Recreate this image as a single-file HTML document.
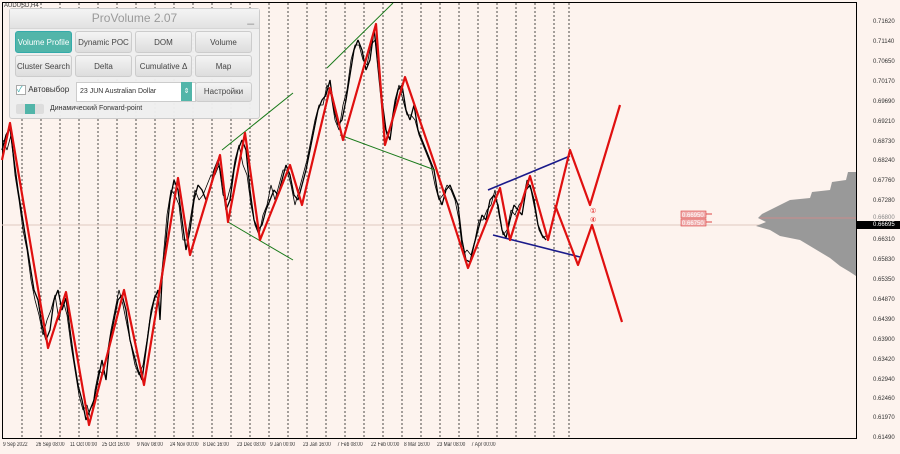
<!DOCTYPE html>
<html><head><meta charset="utf-8"><style>
body{margin:0;width:900px;height:454px;background:#fdf3ee;overflow:hidden;position:relative;font-family:"Liberation Sans",sans-serif}
.ax{position:absolute;font-size:6px;color:#333;white-space:nowrap}
.dt{position:absolute;font-size:6px;color:#333;white-space:nowrap;transform:scaleX(0.8);transform-origin:0 0;top:442px}
#panel{position:absolute;left:9px;top:8px;width:249px;height:109px;background:rgba(238,238,238,.96);border:1px solid #ccc;border-radius:3px;font-family:"Liberation Sans","Noto Sans CJK SC",sans-serif}
.ttl{height:19px;background:linear-gradient(#f4f4f4,#e2e2e2);text-align:center;color:#9a9a9a;font-size:12px;line-height:19px;border-bottom:1px solid #d6d6d6}
.b{position:absolute;width:55px;height:20px;background:linear-gradient(#f4f4f4,#ddd);border:1px solid #ccc;border-radius:3px;font-size:8px;color:#444;text-align:center;line-height:22px}
.b.on{background:#52b5a9;color:#fff;border-color:#3aa}
</style></head><body>
<svg width="900" height="454" style="position:absolute;left:0;top:0">
<rect x="2.5" y="2.5" width="854" height="436" fill="none" stroke="#000" stroke-width="1"/>
<g stroke="#000" stroke-width="0.7" stroke-dasharray="2,2">
<line x1="22" y1="3" x2="22" y2="438"/><line x1="41" y1="3" x2="41" y2="438"/><line x1="60" y1="3" x2="60" y2="438"/><line x1="79" y1="3" x2="79" y2="438"/><line x1="98" y1="3" x2="98" y2="438"/><line x1="117" y1="3" x2="117" y2="438"/><line x1="136" y1="3" x2="136" y2="438"/><line x1="155" y1="3" x2="155" y2="438"/><line x1="174" y1="3" x2="174" y2="438"/><line x1="193" y1="3" x2="193" y2="438"/><line x1="212" y1="3" x2="212" y2="438"/><line x1="231" y1="3" x2="231" y2="438"/><line x1="250" y1="3" x2="250" y2="438"/><line x1="269" y1="3" x2="269" y2="438"/><line x1="288" y1="3" x2="288" y2="438"/><line x1="307" y1="3" x2="307" y2="438"/><line x1="326" y1="3" x2="326" y2="438"/><line x1="345" y1="3" x2="345" y2="438"/><line x1="364" y1="3" x2="364" y2="438"/><line x1="383" y1="3" x2="383" y2="438"/><line x1="402" y1="3" x2="402" y2="438"/><line x1="421" y1="3" x2="421" y2="438"/><line x1="440" y1="3" x2="440" y2="438"/><line x1="459" y1="3" x2="459" y2="438"/><line x1="478" y1="3" x2="478" y2="438"/><line x1="497" y1="3" x2="497" y2="438"/><line x1="516" y1="3" x2="516" y2="438"/><line x1="535" y1="3" x2="535" y2="438"/><line x1="554" y1="3" x2="554" y2="438"/><line x1="569" y1="3" x2="569" y2="438"/>
</g>
<line x1="2" y1="225" x2="856" y2="225" stroke="#e0c8c0" stroke-width="1"/>
<polygon fill="#999" points="856,172 848,172 846,180 832,182 830,190 812,192 810,198 790,200 780,205 770,210 762,214 758,218 766,222 756,226 770,230 780,236 800,240 810,246 820,252 830,258 840,266 850,272 856,276"/>
<line x1="760" y1="218" x2="856" y2="218" stroke="#d88" stroke-width="0.8"/>
<g fill="none" stroke="#000" stroke-width="1.3" stroke-linejoin="bevel">
<polyline points="2,150 6,135 10,128 14,160 18,190 22,215 26,240 30,265 34,290 38,300 42,325 46,340 50,330 54,300 58,290 62,310 66,298 70,330 74,360 78,385 82,400 86,420 90,410 94,400 98,380 102,360 106,380 110,340 114,320 118,300 122,295 126,310 130,340 134,355 138,370 142,380 146,350 150,320 154,300 158,290 160,320 162,280 166,240 170,200 174,180 178,190 182,220 186,250 190,230 194,200 198,185 202,190 206,200 210,190 214,170 218,160 222,180 226,210 230,200 234,170 238,150 242,140 246,150 250,190 254,220 258,230 262,225 266,210 270,200 274,190 278,195 282,180 286,165 290,175 294,195 298,200 302,185 306,170 310,150 314,130 318,110 322,100 326,95 330,80 334,110 338,125 342,120 346,100 350,75 354,50 358,40 362,50 366,70 370,60 374,30 378,60 382,100 386,130 390,140 394,110 398,90 402,85 406,110 410,120 414,105 418,130 422,140 426,150 430,160 434,170 438,195 442,205 446,190 450,185 454,195 458,205 462,240 466,260 470,262 474,245 478,230 482,215 486,220 490,200 494,195 498,205 502,230 506,238 510,220 514,205 518,210 522,215 526,190 530,185 534,200 538,225 542,235 546,240"/>
<polyline stroke-width="0.8" points="3,140 7,150 11,135 15,175 19,200 23,230 27,250 31,280 35,300 39,315 43,335 47,320 51,310 55,295 59,320 63,300 67,315 71,345 75,370 79,395 83,410 87,405 91,420 95,390 99,370 103,375 107,355 111,330 115,310 119,290 123,305 127,325 131,345 135,365 139,375 143,365 147,340 151,310 155,295 159,300 163,260 167,215 171,190 175,195 179,205 183,240 187,240 191,215 195,190 199,200 203,195 207,185 211,175 215,175 219,165 223,195 227,200 231,185 235,160 239,145 243,165 247,175 251,205 255,225 259,235 263,215 267,205 271,185 275,200 279,185 283,170 287,170 291,185 295,205 299,190 303,175 307,160 311,140 315,120 319,105 323,105 327,85 331,95 335,120 339,130 343,105 347,90 351,60 355,45 359,45 363,60 367,65 371,45 375,40 379,80 383,120 387,135 391,125 395,100 399,85 403,100 407,115 411,115 415,120 419,135 423,145 427,155 431,165 435,185 439,200 443,195 447,185 451,190 455,200 459,220 463,255 467,250 471,255 475,240 479,220 483,220 487,210 491,205 495,190 499,215 503,235 507,230 511,210 515,215 519,205 523,200 527,180 531,190 535,210 539,230 543,238 547,235"/>
</g>
<g fill="none" stroke-width="1"><line x1="222" y1="150" x2="293" y2="93" stroke="#1a7a1a"/><line x1="228" y1="222" x2="293" y2="260" stroke="#1a7a1a"/><line x1="327" y1="68" x2="393" y2="3" stroke="#1a7a1a"/><line x1="340" y1="135" x2="435" y2="170" stroke="#1a7a1a"/>
<line x1="488" y1="190" x2="570" y2="156" stroke="#1a1a8a" stroke-width="1.6"/><line x1="493" y1="235" x2="580" y2="257" stroke="#1a1a8a" stroke-width="1.6"/></g>
<polyline fill="none" stroke="#e01010" stroke-width="2.2" stroke-linejoin="round" points="2,160 10,123 48,348 66,292 89,425 124,290 144,385 178,178 190,255 220,155 228,222 245,133 260,240 290,165 302,205 330,88 343,140 376,24 385,145 405,77 435,165 468,268 500,188 510,240 530,176 548,240 570,150 590,205 620,105"/>
<polyline fill="none" stroke="#e01010" stroke-width="2.2" stroke-linejoin="round" points="555,205 578,265 592,225 622,322"/>
<text x="590" y="213" font-size="7" fill="#e01010" font-family="Liberation Sans">①</text>
<text x="590" y="222" font-size="7" fill="#e01010" font-family="Liberation Sans">④</text>
<rect x="681" y="211" width="25" height="7" fill="#f0b0b0" stroke="#d44" stroke-width="0.6"/><text x="682" y="217" font-size="6" fill="#fff">0.66950</text>
<rect x="681" y="219" width="25" height="7" fill="#f0b0b0" stroke="#d44" stroke-width="0.6"/><text x="682" y="225" font-size="6" fill="#fff">0.66750</text>
<line x1="706" y1="214" x2="712" y2="214" stroke="#d44"/><line x1="706" y1="222" x2="712" y2="222" stroke="#d44"/>
<rect x="857" y="221" width="43" height="8" fill="#000"/>
</svg>
<div class="ax" style="left:4px;top:3px">AUDUSD,H4</div>
<div class="ax" style="left:873px;top:19px">0.71620</div><div class="ax" style="left:873px;top:39px">0.71140</div><div class="ax" style="left:873px;top:59px">0.70650</div><div class="ax" style="left:873px;top:79px">0.70170</div><div class="ax" style="left:873px;top:99px">0.69690</div><div class="ax" style="left:873px;top:119px">0.69210</div><div class="ax" style="left:873px;top:139px">0.68730</div><div class="ax" style="left:873px;top:158px">0.68240</div><div class="ax" style="left:873px;top:178px">0.67760</div><div class="ax" style="left:873px;top:198px">0.67280</div><div class="ax" style="left:873px;top:215px;color:#888">0.66800</div><div class="ax" style="left:873px;top:222px;color:#fff">0.66695</div><div class="ax" style="left:873px;top:237px">0.66310</div><div class="ax" style="left:873px;top:257px">0.65830</div><div class="ax" style="left:873px;top:277px">0.65350</div><div class="ax" style="left:873px;top:297px">0.64870</div><div class="ax" style="left:873px;top:317px">0.64390</div><div class="ax" style="left:873px;top:337px">0.63900</div><div class="ax" style="left:873px;top:357px">0.63420</div><div class="ax" style="left:873px;top:377px">0.62940</div><div class="ax" style="left:873px;top:396px">0.62460</div><div class="ax" style="left:873px;top:415px">0.61970</div><div class="ax" style="left:873px;top:435px">0.61490</div>
<div class="dt" style="left:3px">9 Sep 2022</div><div class="dt" style="left:36px">26 Sep 08:00</div><div class="dt" style="left:70px">11 Oct 00:00</div><div class="dt" style="left:102px">25 Oct 16:00</div><div class="dt" style="left:137px">9 Nov 08:00</div><div class="dt" style="left:170px">24 Nov 00:00</div><div class="dt" style="left:203px">8 Dec 16:00</div><div class="dt" style="left:237px">23 Dec 08:00</div><div class="dt" style="left:270px">9 Jan 00:00</div><div class="dt" style="left:303px">23 Jan 16:00</div><div class="dt" style="left:337px">7 Feb 08:00</div><div class="dt" style="left:371px">22 Feb 00:00</div><div class="dt" style="left:404px">8 Mar 16:00</div><div class="dt" style="left:437px">23 Mar 08:00</div><div class="dt" style="left:471px">7 Apr 00:00</div>
<div id="panel">
<div class="ttl">ProVolume 2.07<span style="position:absolute;right:5px;color:#888">_</span></div>
<div class="b on" style="left:5px;top:22px">Volume Profile</div>
<div class="b" style="left:65px;top:22px">Dynamic POC</div>
<div class="b" style="left:125px;top:22px">DOM</div>
<div class="b" style="left:185px;top:22px">Volume</div>
<div class="b" style="left:5px;top:46px">Cluster Search</div>
<div class="b" style="left:65px;top:46px">Delta</div>
<div class="b" style="left:125px;top:46px">Cumulative Δ</div>
<div class="b" style="left:185px;top:46px">Map</div>
<div style="position:absolute;left:6px;top:76px;font-size:8px;color:#333"><span style="display:inline-block;width:8px;height:8px;background:#fff;border:1px solid #aaa;color:#3aa;font-size:8px;line-height:8px">✓</span> Автовыбор</div>
<div style="position:absolute;left:66px;top:73px;width:115px;height:18px;background:#fff;border:1px solid #ccc;font-size:7px;line-height:18px;padding-left:3px;color:#333">23 JUN Australian Dollar</div>
<div style="position:absolute;left:171px;top:73px;width:11px;height:19px;background:#52b5a9;color:#fff;font-size:7px;text-align:center;line-height:19px">⇕</div>
<div class="b" style="left:185px;top:73px;height:18px;line-height:18px">Настройки</div>
<div style="position:absolute;left:6px;top:95px;width:28px;height:10px;background:#ddd;border-radius:2px"><div style="margin-left:9px;width:10px;height:10px;background:#52b5a9"></div></div>
<div style="position:absolute;left:40px;top:96px;font-size:7px;color:#333">Динамический Forward-point</div>
</div>
</body></html>
